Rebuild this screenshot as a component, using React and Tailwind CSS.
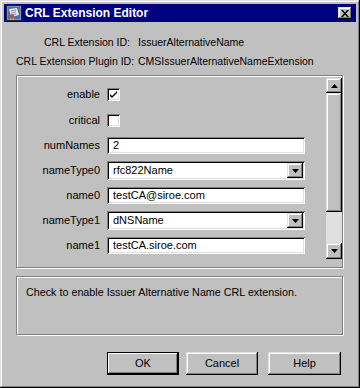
const raised =
  'shadow-[inset_-1px_-1px_0_#000,inset_1px_1px_0_#dfdfdf,inset_-2px_-2px_0_#808080,inset_2px_2px_0_#fff]';
const sunken =
  'shadow-[inset_1px_1px_0_#808080,inset_-1px_-1px_0_#fff,inset_2px_2px_0_#000,inset_-2px_-2px_0_#dfdfdf]';
const etched = 'border border-[#808080] shadow-[inset_1px_1px_0_#fff,1px_1px_0_#fff]';

const DownArrow = () => (
  <svg width="7" height="4" viewBox="0 0 7 4">
    <path d="M0 0h7L3.5 4z" fill="#000" />
  </svg>
);

const UpArrow = () => (
  <svg width="7" height="4" viewBox="0 0 7 4">
    <path d="M0 4h7L3.5 0z" fill="#000" />
  </svg>
);

const Checkbox = ({ checked }) => (
  <div className={`w-[13px] h-[13px] bg-white ${sunken} flex items-center justify-center`}>
    {checked && (
      <svg width="7" height="7" viewBox="0 0 7 7">
        <path d="M0 3l2 2 5-5v2l-5 5-2-2z" fill="#000" />
      </svg>
    )}
  </div>
);

const TextField = ({ value }) => (
  <div className={`w-[198px] h-[17px] bg-white ${sunken} pl-[6px] flex items-center text-[11px] text-black`}>
    {value}
  </div>
);

const Select = ({ value }) => (
  <div className={`w-[198px] h-[19px] bg-white ${sunken} pl-[6px] pr-[2px] flex items-center text-[11px] text-black`}>
    <span className="flex-1">{value}</span>
    <div className={`w-[16px] h-[15px] bg-[#c0c0c0] ${raised} flex items-center justify-center`}>
      <DownArrow />
    </div>
  </div>
);

const Row = ({ label, h = 'h-[25px]', children }) => (
  <div className={`flex items-center ${h}`}>
    <div className="w-[84px] text-right text-[11px] text-black pr-[1px]">{label}</div>
    <div className="ml-[6px]">{children}</div>
  </div>
);

const Button = ({ label, isDefault, className }) => (
  <div
    className={`w-[72px] h-[23px] bg-[#c0c0c0] flex items-center justify-center text-[11px] text-black ${
      isDefault
        ? 'border border-black shadow-[inset_-1px_-1px_0_#000,inset_1px_1px_0_#fff,inset_-2px_-2px_0_#808080]'
        : raised
    } ${className || ''}`}
  >
    {label}
  </div>
);

const TitleIcon = () => (
  <svg width="16" height="16" viewBox="0 0 16 16">
    <rect x="0.5" y="0.5" width="15" height="15" fill="#8090b0" stroke="#202040" />
    <rect x="2" y="2" width="12" height="12" fill="#5070a0" />
    <path d="M3 4l8-1 2 7-8 2z" fill="#e8e8f0" />
    <path d="M5 6l5-1M5 8l5-1M6 10l4-1" stroke="#6070c0" strokeWidth="0.8" />
    <circle cx="6" cy="11" r="2" fill="#d04040" />
    <path d="M5 12l-1 3h1.5zM7 12l1 3h-1.5z" fill="#e0c020" />
  </svg>
);

export default function App() {
  return (
    <div
      className="w-[360px] h-[388px] bg-[#c0c0c0] p-[4px] flex flex-col font-['Liberation_Sans',Arial,sans-serif] shadow-[inset_-1px_-1px_0_#000,inset_1px_1px_0_#dfdfdf,inset_-2px_-2px_0_#808080,inset_2px_2px_0_#fff]"
    >
      <div className="h-[18px] bg-[#000080] flex items-center pl-[2px] pr-[4px]">
        <TitleIcon />
        <span className="ml-[3px] text-white font-bold text-[12px] leading-none">CRL Extension Editor</span>
        <div className={`ml-auto w-[14px] h-[12px] bg-[#c0c0c0] ${raised} flex items-center justify-center`}>
          <svg width="8" height="7" viewBox="0 0 8 7">
            <path d="M0 0h2l2 2.5L6 0h2L5 3.5 8 7H6L4 4.5 2 7H0l3-3.5z" fill="#000" />
          </svg>
        </div>
      </div>

      <div className="flex flex-col pl-[12px] pr-[13px]">
        <div className="mt-[14px] h-[14px] flex items-center text-[10.5px] text-black">
          <div className="w-[114px] text-right">CRL Extension ID:</div>
          <div className="ml-[8px]">IssuerAlternativeName</div>
        </div>
        <div className="mt-[5px] h-[14px] flex items-center text-[10.5px] text-black">
          <div className="w-[114px] text-right whitespace-nowrap">CRL Extension Plugin ID:</div>
          <div className="ml-[8px]">CMSIssuerAlternativeNameExtension</div>
        </div>

        <div className={`mt-[6px] h-[193px] ${etched} flex`}>
          <div className="flex-1 flex flex-col pt-[5px]">
            <Row label="enable" h="h-[26px]">
              <Checkbox checked />
            </Row>
            <Row label="critical" h="h-[26px]">
              <Checkbox />
            </Row>
            <Row label="numNames">
              <TextField value="2" />
            </Row>
            <Row label="nameType0">
              <Select value="rfc822Name" />
            </Row>
            <Row label="name0">
              <TextField value="testCA@siroe.com" />
            </Row>
            <Row label="nameType1">
              <Select value="dNSName" />
            </Row>
            <Row label="name1">
              <TextField value="testCA.siroe.com" />
            </Row>
          </div>
          <div className="w-[16px] mt-[2px] h-[181px] flex flex-col">
            <div className={`h-[15px] bg-[#c0c0c0] ${raised} flex items-center justify-center`}>
              <UpArrow />
            </div>
            <div className={`h-[119px] bg-[#c0c0c0] ${raised}`} />
            <div className="h-[31px] bg-[#e0e0e0]" />
            <div className={`h-[16px] bg-[#c0c0c0] ${raised} flex items-center justify-center`}>
              <DownArrow />
            </div>
          </div>
        </div>

        <div className={`mt-[8px] h-[59px] ${etched} pl-[9px] pt-[8px]`}>
          <div className="text-[10.75px] text-black leading-[14px]">
            Check to enable Issuer Alternative Name CRL extension.
          </div>
        </div>

        <div className="mt-[17px] flex justify-end pr-[2px]">
          <Button label="OK" isDefault />
          <Button label="Cancel" className="ml-[7px]" />
          <Button label="Help" className="ml-[10px] w-[73px]" />
        </div>
      </div>
    </div>
  );
}
